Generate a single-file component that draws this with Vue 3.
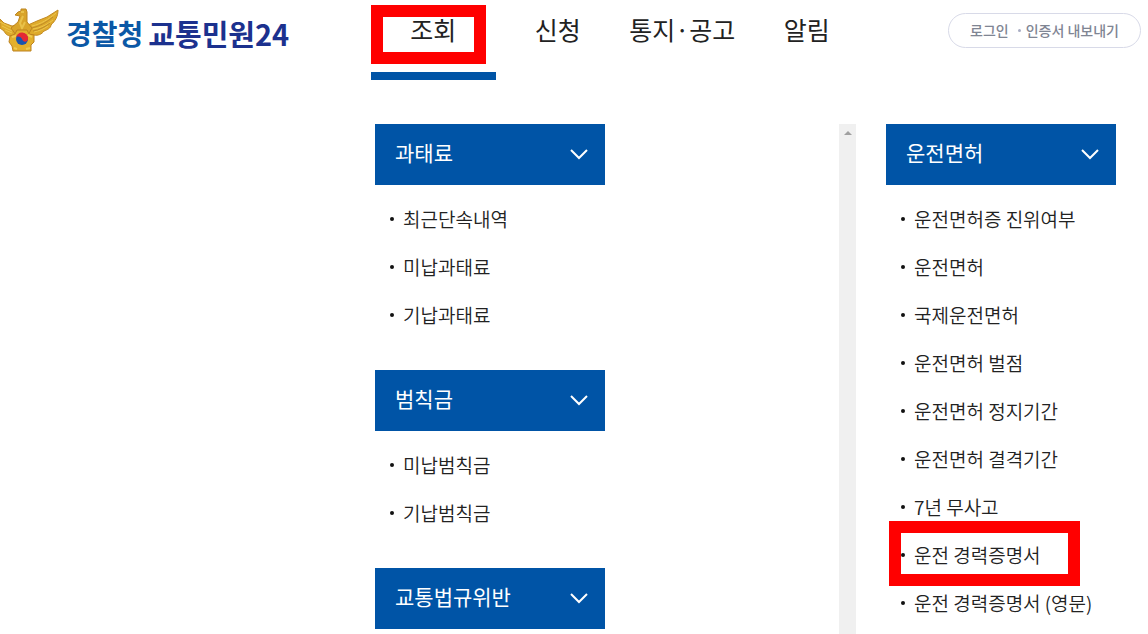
<script setup>
  import { ref } from 'vue'

  const activeMenu = ref('조회')
  const menus = [ '조회', '신청', '통지·공고', '알림' ]

  const leftGroups = ref([
    { title: '과태료', open: true, items: [ '최근단속내역', '미납과태료', '기납과태료' ] },
    { title: '범칙금', open: true, items: [ '미납범칙금', '기납범칙금' ] },
    { title: '교통법규위반', open: true, items: [] }
  ])

  const rightGroups = ref([
    {
      title: '운전면허',
      open: true,
      items: [
        '운전면허증 진위여부',
        '운전면허',
        '국제운전면허',
        '운전면허 벌점',
        '운전면허 정지기간',
        '운전면허 결격기간',
        '7년 무사고',
        '운전 경력증명서',
        '운전 경력증명서 (영문)'
      ]
    }
  ])

  const markedItem = '운전 경력증명서'

  function toggleGroup(group){
    group.open = !group.open
  }
</script>

<template>
  <div class="page">
    <header class="header">
      <a class="logo" href="#">
        <svg class="emblem" viewBox="0 0 60 46" aria-hidden="true">
          <!-- wings -->
          <path d="M0 11 L4 15 L12 18 L17 17 L28 17 L37 13 L47 9 L58 2 C58 9 55 13 51 17 C51 20 47 22 44 23 C42 26 38 28 34 27 L10 28 C6 27 5 25 4 23 L0 20 Z" fill="#deaa2b" stroke="#c38a22" stroke-width="1" />
          <path d="M32 18 C41 16 49 11 56 5 M33 21 C41 20 48 16 53 12 M34 24 C39 23 44 21 48 18 M0 14 L12 20 M2 18 L12 23 M5 22 L12 25" fill="none" stroke="#edc64c" stroke-width="1" />
          <path d="M32 20 C40 18 47 14 53 9 M33 23 C39 22 45 19 50 15" fill="none" stroke="#c08c28" stroke-width="1" />
          <!-- head and body -->
          <path d="M15 7 L18 4 L21 3 L21 1 L26 1 L27 4 L27 14 L32 20 L28 27 L16 27 L11 20 L18 14 L20 8 Z" fill="#d9a42a" stroke="#bd8520" stroke-width="1" />
          <path d="M21 4 L24 4 M23 8 L20 15 L22 20 L25 14" fill="none" stroke="#e9c24a" stroke-width="2" />
          <!-- flower -->
          <path d="M17 22 L27 22 L29 26 L34 27 L34 34 L31 37 L31 43 L13 43 L12 38 L9 34 L10 28 L15 26 Z" fill="#e3b02c" stroke="#bd8220" stroke-width="1" />
          <path d="M12 29 L16 28 M32 29 L28 27 M14 40 L17 41 M30 40 L26 41" stroke="#efcb50" stroke-width="2" />
          <circle cx="22" cy="31" r="6" fill="#1854ad" />
          <path d="M16 30 A6 6 0 0 1 28 31 C27 35 23 34 22 31 C20 28 17 28 16 30 Z" fill="#e52734" />
        </svg>
        <span class="logo-police">경찰청</span>
        <span class="logo-name">교통민원24</span>
      </a>

      <nav class="menu">
        <a
          v-for="menu in menus"
          :key="menu"
          class="menu-item"
          :class="{ active: menu === activeMenu }"
          href="#"
          @click.prevent="activeMenu = menu"
        >
          {{ menu }}
          <span v-if="menu === '조회'" class="mark mark-menu"></span>
        </a>
      </nav>

      <button class="login" type="button">
        <span>로그인</span>
        <span class="login-dot"></span>
        <span>인증서 내보내기</span>
      </button>
    </header>

    <main class="content">
      <div class="pane">
        <section v-for="group in leftGroups" :key="group.title" class="group">
          <button class="group-title" type="button" :aria-expanded="group.open" @click="toggleGroup(group)">
            <span class="group-label">{{ group.title }}</span>
            <svg class="chevron" viewBox="0 0 18 12" aria-hidden="true">
              <path d="M1 2 L9 10 L17 2" />
            </svg>
          </button>
          <ul v-if="group.open && group.items.length" class="list">
            <li v-for="item in group.items" :key="item" class="list-item">
              <a href="#">{{ item }}</a>
            </li>
          </ul>
        </section>
      </div>

      <div class="scrollbar">
        <svg class="scroll-arrow" viewBox="0 0 8 4" aria-hidden="true">
          <path d="M0 4 L4 0 L8 4 Z" />
        </svg>
      </div>

      <div class="pane">
        <section v-for="group in rightGroups" :key="group.title" class="group">
          <button class="group-title" type="button" :aria-expanded="group.open" @click="toggleGroup(group)">
            <span class="group-label">{{ group.title }}</span>
            <svg class="chevron" viewBox="0 0 18 12" aria-hidden="true">
              <path d="M1 2 L9 10 L17 2" />
            </svg>
          </button>
          <ul v-if="group.open" class="list">
            <li v-for="item in group.items" :key="item" class="list-item">
              <a href="#">{{ item }}</a>
              <span v-if="item === markedItem" class="mark mark-item"></span>
            </li>
          </ul>
        </section>
      </div>
    </main>
  </div>
</template>

<style>
  body {
    margin: 0;
    background-color: #ffffff;
  }
</style>

<style scoped>

  .page {
    display: flex;
    flex-direction: column;
    min-height: 100vh;
    font-family: "Noto Sans CJK KR", "Noto Sans", sans-serif;
    color: #222222;
  }

  a {
    color: inherit;
    text-decoration: none;
  }

  button {
    font-family: inherit;
    cursor: pointer;
  }

  .header {
    display: grid;
    grid-template-columns: 371px 498px 1fr;
    align-items: start;
    height: 80px;
    margin-bottom: 44px;
  }

  .logo {
    display: flex;
    align-items: flex-start;
    padding-top: 8px;
    font-size: 28px;
    font-weight: 700;
    line-height: 50px;
    white-space: nowrap;
  }

  .emblem {
    width: 60px;
    height: 46px;
    margin-right: 6px;
  }

  .logo-police {
    margin-right: 5px;
    color: #0b58a6;
  }

  .logo-name {
    color: #1c318e;
    font-size: 29px;
  }

  .menu {
    display: grid;
    grid-template-columns: repeat(4, 1fr);
  }

  .menu-item {
    position: relative;
    box-sizing: border-box;
    height: 80px;
    padding-top: 11px;
    border-bottom: 8px solid transparent;
    font-size: 25px;
    line-height: 36px;
    text-align: center;
  }

  .menu-item.active {
    border-bottom-color: #0054a6;
  }

  .mark {
    position: absolute;
    box-sizing: border-box;
    border: 12px solid #ff0000;
    pointer-events: none;
  }

  .mark-menu {
    top: 5px;
    left: 0;
    width: 115px;
    height: 59px;
  }

  .mark-item {
    top: -10px;
    left: 3px;
    width: 191px;
    height: 65px;
  }

  .login {
    display: flex;
    align-items: center;
    justify-content: center;
    justify-self: end;
    width: 193px;
    height: 35px;
    margin: 13px 7px 0 0;
    padding: 0 0 2px;
    border: 1px solid #d8dae8;
    border-radius: 18px;
    background-color: #ffffff;
    color: #7f8593;
    font-size: 14px;
    font-weight: 500;
    white-space: nowrap;
  }

  .login-dot {
    width: 3px;
    height: 3px;
    margin: 2px 5px 0 9px;
    border-radius: 50%;
    background-color: #a9adc4;
  }

  .content {
    display: flex;
    flex: 1;
    padding-left: 375px;
  }

  .pane {
    width: 230px;
  }

  .group-title {
    display: flex;
    align-items: center;
    justify-content: space-between;
    width: 100%;
    height: 61px;
    padding: 0 17px 2px 20px;
    border: 0;
    background-color: #0054a6;
    color: #ffffff;
    font-size: 21px;
  }

  .group-label {
    padding-bottom: 3px;
  }

  .chevron {
    width: 18px;
    height: 12px;
  }

  .chevron path {
    fill: none;
    stroke: #ffffff;
    stroke-width: 2;
  }

  .list {
    margin: 0;
    padding: 10px 0 31px;
    list-style: none;
  }

  .list-item {
    position: relative;
    display: flex;
    align-items: center;
    height: 48px;
    padding-left: 15px;
    font-size: 19px;
    font-weight: 350;
    white-space: nowrap;
  }

  .list-item a {
    padding-bottom: 2px;
  }

  .list-item::before {
    content: "";
    width: 4px;
    height: 4px;
    margin-right: 9px;
    border-radius: 50%;
    background-color: #111111;
  }

  .scrollbar {
    display: flex;
    justify-content: center;
    width: 17px;
    margin: 0 30px 0 234px;
    background-color: #f0f0f0;
  }

  .scroll-arrow {
    width: 8px;
    height: 4px;
    margin-top: 7px;
    fill: #a0a0a0;
  }

</style>
